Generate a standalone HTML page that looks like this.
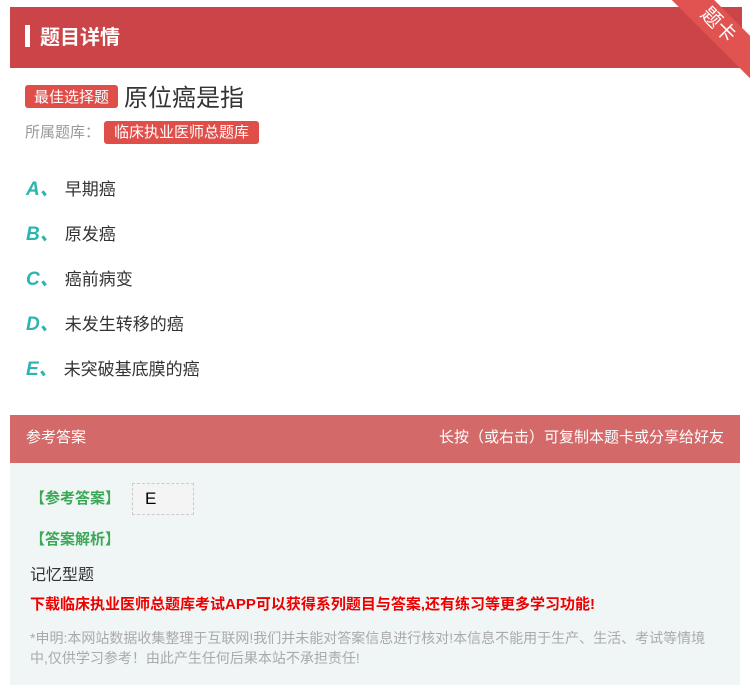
<!DOCTYPE html>
<html><head><meta charset="utf-8"><style>
body{margin:0;width:750px;height:685px;background:#fff;font-family:"Liberation Sans","Noto Sans CJK SC",sans-serif;position:relative;overflow:hidden}
.hdr{position:absolute;left:10px;top:7px;width:732px;height:61px;background:#cb4548}
.hdr .bar{position:absolute;left:15px;top:18px;width:5px;height:22px;background:#fff}
.hdr .t{position:absolute;left:30px;top:14px;color:#fff;font-size:20px;font-weight:bold}
.rib{position:absolute;right:-38px;top:10px;width:140px;height:30px;background:#e05350;color:#fff;transform:rotate(45deg);text-align:center;font-size:20px;line-height:30px;transform-origin:center}
.tag{display:inline-block;background:#e04e4a;color:#fff;border-radius:3px}
.q{position:absolute;left:25px;top:78px;font-size:24px;color:#333}
.q .tag{font-size:15px;padding:1px 9px;vertical-align:4px;margin-right:6px}
.lib{position:absolute;left:25px;top:121px;font-size:15px;color:#999}
.lib .tag{font-size:15px;padding:0 10px;line-height:23px;margin-left:4px}
.opt{position:absolute;left:26px;font-size:17px;color:#333}
.opt b{color:#2bb5b0;font-style:italic;font-size:19px;margin-right:6px}
.ans{position:absolute;left:10px;top:415px;width:730px;height:270px;background:#eff6f5}
.ah{height:48px;background:#d46969;color:#fff;font-size:15px;line-height:46px;padding:0 16px}
.g{color:#3aa856;font-weight:bold;font-size:15px;position:absolute}
</style></head><body>
<div class="hdr"><div class="bar"></div><div class="t">题目详情</div></div>
<div class="rib">题卡</div>
<div class="q"><span class="tag">最佳选择题</span>原位癌是指</div>
<div class="lib">所属题库：<span class="tag">临床执业医师总题库</span></div>
<div class="opt" style="top:174px"><b>A、</b>早期癌</div>
<div class="opt" style="top:219px"><b>B、</b>原发癌</div>
<div class="opt" style="top:264px"><b>C、</b>癌前病变</div>
<div class="opt" style="top:309px"><b>D、</b>未发生转移的癌</div>
<div class="opt" style="top:354px"><b>E、</b>未突破基底膜的癌</div>
<div class="ans">
<div class="ah"><span>参考答案</span><span style="float:right">长按（或右击）可复制本题卡或分享给好友</span></div>
<div class="g" style="left:20px;top:72px">【参考答案】</div>
<div style="position:absolute;left:122px;top:68px;width:62px;height:32px;background:#f4f4f4;border:1px dashed #ccc;font-size:17px;line-height:30px;padding-left:12px;box-sizing:border-box">E</div>
<div class="g" style="left:20px;top:113px">【答案解析】</div>
<div style="position:absolute;left:20px;top:146px;font-size:16px;color:#333">记忆型题</div>
<div style="position:absolute;left:20px;top:178px;font-size:15px;color:#e00;font-weight:bold">下载临床执业医师总题库考试APP可以获得系列题目与答案,还有练习等更多学习功能!</div>
<div style="position:absolute;left:20px;top:213px;width:690px;font-size:14px;color:#aaa;line-height:20px">*申明:本网站数据收集整理于互联网!我们并未能对答案信息进行核对!本信息不能用于生产、生活、考试等情境中,仅供学习参考！由此产生任何后果本站不承担责任!</div>
</div>
</body></html>
